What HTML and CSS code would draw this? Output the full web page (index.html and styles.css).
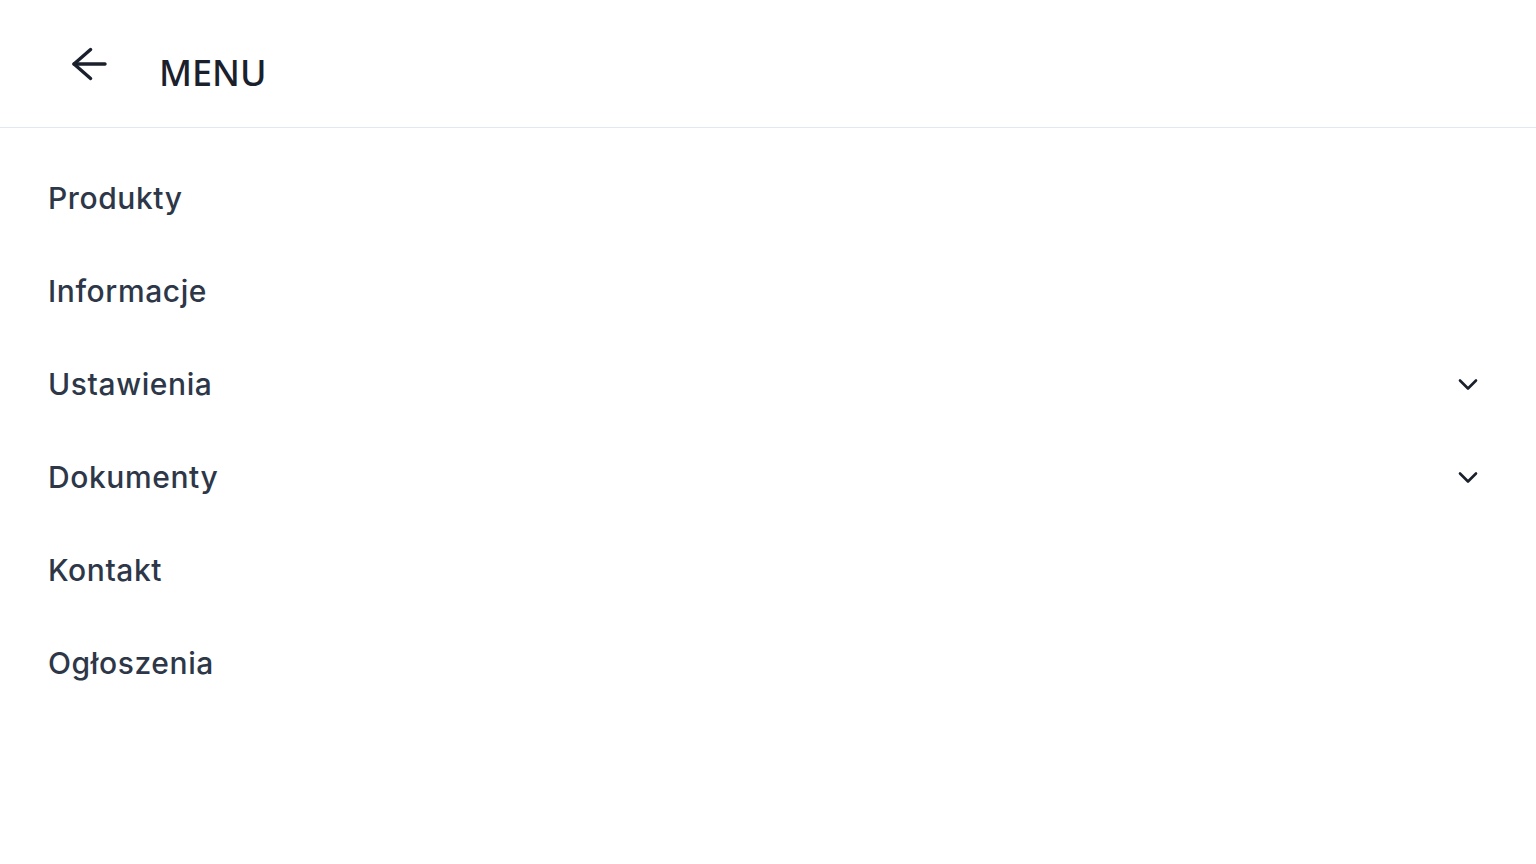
FILE: index.html
```html
<!DOCTYPE html>
<html lang="pl">
<head>
    <meta charset="UTF-8">
    <meta name="viewport" content="width=device-width, initial-scale=1.0">
    <title>Menu</title>
    <link rel="stylesheet" href="styles.css">
</head>
<body>
    <!-- Top bar -->
    <header class="menu-header">
        <button class="back-btn" aria-label="Wstecz">
            <svg width="48" height="48" viewBox="0 0 24 24" fill="none" stroke="currentColor" stroke-width="1.7" stroke-linecap="round" stroke-linejoin="round">
                <path d="M20.5 12H5"/>
                <path d="M13.3 4.75L5 12l8.3 7.25"/>
            </svg>
        </button>
        <h1 class="menu-title">MENU</h1>
    </header>

    <!-- Navigation list -->
    <nav class="menu-list">
        <a class="menu-item" href="#">Produkty</a>
        <a class="menu-item" href="#">Informacje</a>
        <a class="menu-item" href="#">
            <span>Ustawienia</span>
            <svg class="chevron" width="24" height="24" viewBox="0 0 24 24" fill="none" stroke="currentColor" stroke-width="2.6" stroke-linecap="round" stroke-linejoin="round"><path d="M4 8.5l8 8 8-8"/></svg>
        </a>
        <a class="menu-item" href="#">
            <span>Dokumenty</span>
            <svg class="chevron" width="24" height="24" viewBox="0 0 24 24" fill="none" stroke="currentColor" stroke-width="2.6" stroke-linecap="round" stroke-linejoin="round"><path d="M4 8.5l8 8 8-8"/></svg>
        </a>
        <a class="menu-item" href="#">Kontakt</a>
        <a class="menu-item" href="#">Ogłoszenia</a>
    </nav>
</body>
</html>
```

FILE: styles.css
```css
body {
    margin: 0;
    background: #ffffff;
    font-family: Inter, "Open Sans", sans-serif;
    color: #2d3748;
}

.menu-header {
    height: 127px;
    display: flex;
    align-items: center;
    padding: 0 56px 0 64px;
    border-bottom: 1px solid #e2e8f0;
}

.back-btn {
    width: 48px;
    height: 48px;
    padding: 0;
    border: none;
    background: none;
    color: #1a202c;
    display: flex;
    align-items: center;
    justify-content: center;
    cursor: pointer;
}

.menu-title {
    margin: 17px 0 0 47px;
    font-family: "Noto Sans", "Open Sans", sans-serif;
    font-size: 36px;
    font-weight: 500;
    color: #1a202c;
}

/* List of links */
.menu-list {
    display: flex;
    flex-direction: column;
    padding: 23px 56px 0 48px;
}

.menu-item {
    height: 93px;
    display: flex;
    align-items: center;
    justify-content: space-between;
    font-size: 30px;
    font-weight: 500;
    letter-spacing: 0.6px;
    color: #2d3748;
    text-decoration: none;
}

.chevron {
    color: #1a202c;
}
```
